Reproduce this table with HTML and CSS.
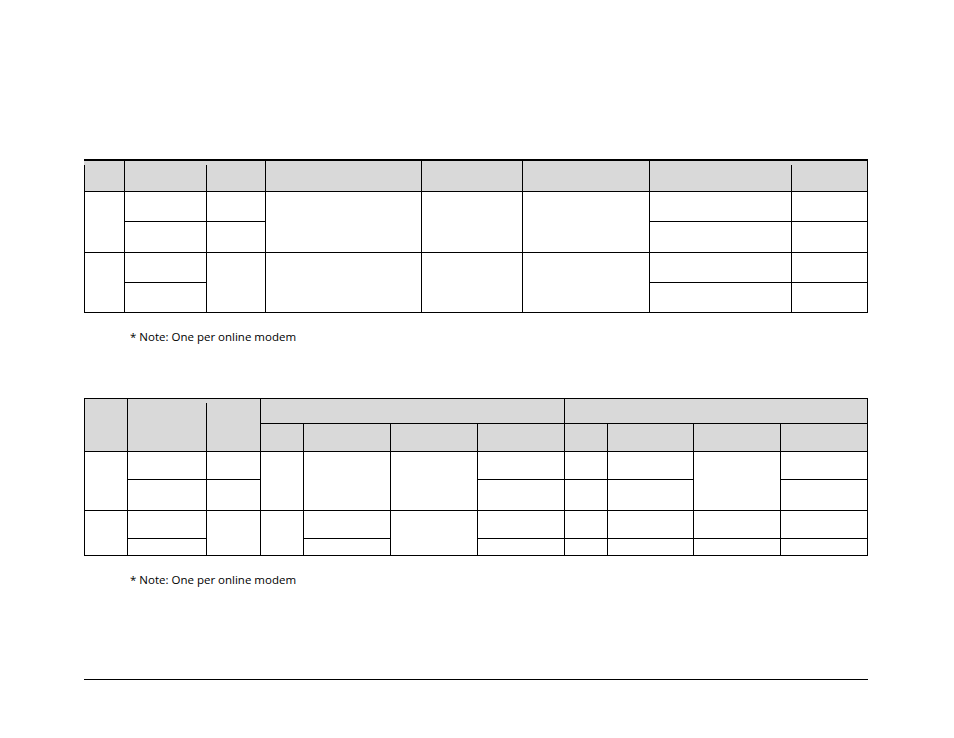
FILE: index.html
```html
<!DOCTYPE html>
<html lang="en">
<head>
<meta charset="utf-8">
<title>Tables</title>
<link rel="stylesheet" href="styles.css">
</head>
<body>
<div class="page">
  <table class="grid t1">
    <colgroup>
      <col class="w40"><col class="w82"><col class="w59"><col class="w156"><col class="w101"><col class="w127"><col class="w142"><col class="w76">
    </colgroup>
    <tr class="h1">
      <th class="gap"></th><th></th><th class="gap"></th><th></th><th></th><th></th><th></th><th class="gap"></th>
    </tr>
    <tr class="r">
      <td rowspan="2"></td><td></td><td></td><td rowspan="2"></td><td rowspan="2"></td><td rowspan="2"></td><td></td><td></td>
    </tr>
    <tr class="r r-tall">
      <td></td><td></td><td></td><td></td>
    </tr>
    <tr class="r">
      <td rowspan="2"></td><td></td><td rowspan="2"></td><td rowspan="2"></td><td rowspan="2"></td><td rowspan="2"></td><td></td><td></td>
    </tr>
    <tr class="r">
      <td></td><td></td><td></td>
    </tr>
  </table>
  <p class="note">* Note: One per online modem</p>

  <table class="grid t2">
    <colgroup>
      <col class="w43"><col class="w79"><col class="w54"><col class="w43"><col class="w87"><col class="w87"><col class="w87"><col class="w43"><col class="w86"><col class="w87"><col class="w87">
    </colgroup>
    <tr class="g1">
      <th rowspan="2"></th><th rowspan="2"></th><th rowspan="2" class="gap"></th><th colspan="4"></th><th colspan="4"></th>
    </tr>
    <tr class="g2">
      <th></th><th></th><th></th><th></th><th></th><th></th><th></th><th></th>
    </tr>
    <tr class="s1">
      <td rowspan="2"></td><td></td><td></td><td rowspan="2"></td><td rowspan="2"></td><td rowspan="2"></td><td></td><td></td><td></td><td rowspan="2"></td><td></td>
    </tr>
    <tr class="s2">
      <td></td><td></td><td></td><td></td><td></td><td></td>
    </tr>
    <tr class="s3">
      <td rowspan="2"></td><td></td><td rowspan="2"></td><td rowspan="2"></td><td></td><td rowspan="2"></td><td></td><td></td><td></td><td></td><td></td>
    </tr>
    <tr class="s4">
      <td></td><td></td><td></td><td></td><td></td><td></td><td></td>
    </tr>
  </table>
  <p class="note note-2">* Note: One per online modem</p>

  <div class="rule"></div>
</div>
</body>
</html>
```

FILE: styles.css
```css
html, body {
  margin: 0;
  padding: 0;
  background: #ffffff;
}

.page {
  padding: 159px 0 0 84px;
  font-family: "Open Sans", "Liberation Sans", sans-serif;
  color: #000;
}

.grid {
  border-collapse: separate;
  border-spacing: 0;
  table-layout: fixed;
  width: 784px;
  border-top: 1px solid #000;
  border-right: 1px solid #000;
}

.t1 {
  border-top-width: 2px;
}

.grid th,
.grid td {
  padding: 0;
  border-left: 1px solid #000;
  border-bottom: 1px solid #000;
}

.grid th {
  background: #d9d9d9;
}

.grid th.gap {
  border-left: none;
  background: linear-gradient(#000, #000) left bottom / 1px calc(100% - 4px) no-repeat, #d9d9d9;
}

/* column widths */
.w40 { width: 40px; }
.w82 { width: 82px; }
.w59 { width: 59px; }
.w156 { width: 156px; }
.w101 { width: 101px; }
.w127 { width: 127px; }
.w142 { width: 142px; }
.w76 { width: 76px; }
.w43 { width: 43px; }
.w79 { width: 79px; }
.w54 { width: 54px; }
.w87 { width: 87px; }
.w86 { width: 86px; }

/* row heights */
.t1 .h1 { height: 31px; }
.t1 .r { height: 30px; }
.t1 .r-tall { height: 31px; }

.t2 .g1 { height: 25px; }
.t2 .g2 { height: 28px; }
.t2 .s1 { height: 28px; }
.t2 .s2 { height: 31px; }
.t2 .s3 { height: 28px; }
.t2 .s4 { height: 17px; }

.note {
  margin: 16px 0 0 46px;
  font-size: 11.5px;
  line-height: 16px;
}

.note-2 {
  margin-top: 16px;
}

.t2 {
  margin-top: 53px;
}

.rule {
  margin-top: 91px;
  width: 784px;
  height: 1px;
  background: #000;
}
```
